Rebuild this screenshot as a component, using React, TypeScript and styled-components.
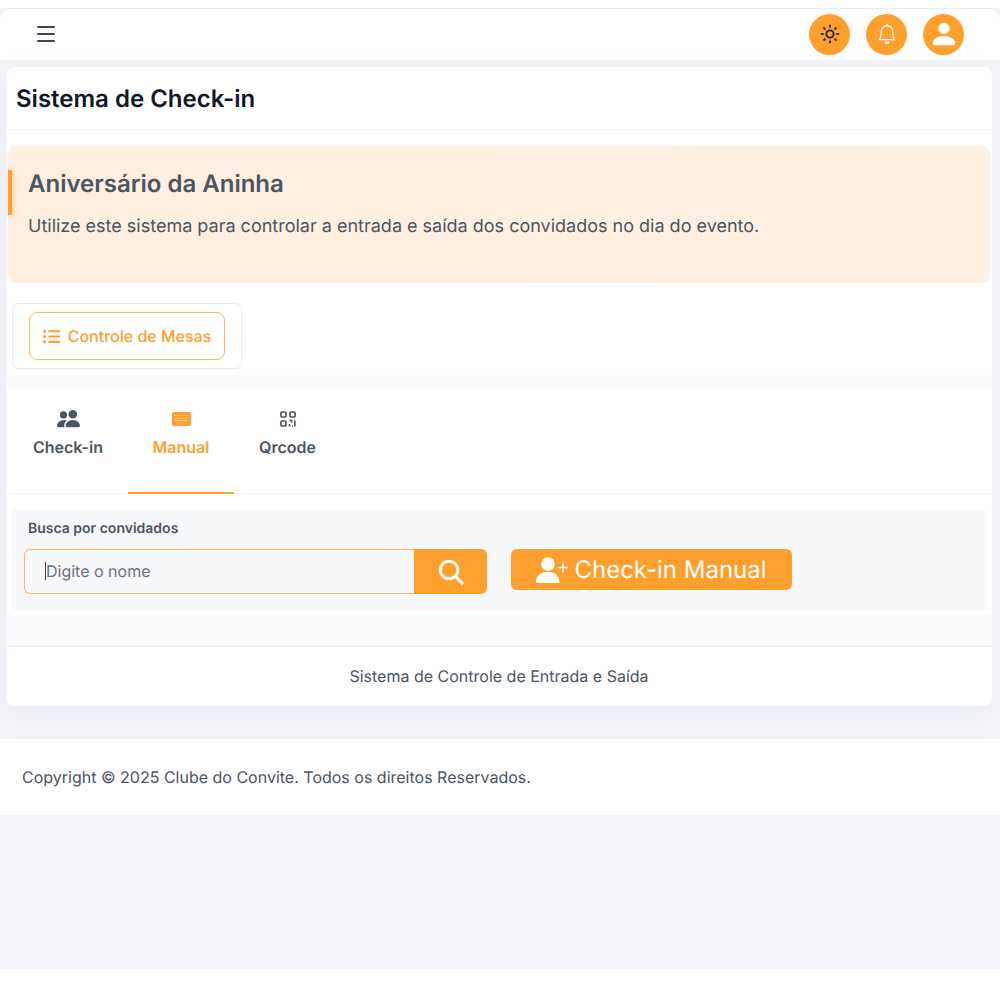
import React from "react";
import styled, { createGlobalStyle } from "styled-components";
import { Menu } from "lucide-react";
import { BsPeopleFill, BsBell, BsPersonFill } from "react-icons/bs";
import { BiSun } from "react-icons/bi";
import { FaListUl } from "react-icons/fa";

const orange = "#ff9f2d";
const ink = "#4b5563";

const Global = createGlobalStyle`
  html, body { margin: 0; background: #fff; }
  * { box-sizing: border-box; }
  body {
    font-family: Inter, "Liberation Sans", sans-serif;
    color: ${ink};
    text-rendering: geometricPrecision;
  }
`;
const Shell = styled.div`
  margin-top: 8px;
  height: 961px;
  background: #f4f5fa;
  display: flex;
  flex-direction: column;
`;
const TopBar = styled.header`
  height: 52px;
  flex: none;
  background: #fff;
  border-top: 1px solid #ececf0;
  border-radius: 10px 10px 0 0;
  display: flex;
  align-items: center;
  padding: 0 36px 0 34px;
  justify-content: space-between;
`;
const MenuButton = styled.span`
  display: flex;
  color: #3f4654;
  margin-top: -1px;
`;
const Actions = styled.div`
  display: flex;
  gap: 16px;
  margin-top: -1px;
`;
const RoundButton = styled.span<{ $dark?: boolean }>`
  width: 41px;
  height: 41px;
  border-radius: 50%;
  background: ${orange};
  color: ${(p) => (p.$dark ? "#2b2b2b" : "#fff")};
  display: flex;
  align-items: center;
  justify-content: center;
`;
const Main = styled.main`
  padding: 7px 8px 0 6px;
  flex: none;
`;
const Card = styled.section`
  height: 639px;
  background: #fff;
  border-radius: 8px;
  box-shadow: 0 10px 30px rgba(120, 125, 170, 0.08);
  display: flex;
  flex-direction: column;
  overflow: hidden;
`;
const CardHeader = styled.div`
  height: 63px;
  flex: none;
  border-bottom: 1px solid #f0f1f4;
  padding: 0 10px;
  display: flex;
  align-items: center;
`;
const Title = styled.h1`
  margin: 0;
  font-size: 24px;
  font-weight: 600;
  color: #111827;
`;
const Banner = styled.div`
  position: relative;
  margin: 16px 2px 0;
  height: 137px;
  flex: none;
  background: linear-gradient(90deg, #ffefe0, #fff1e4);
  border-radius: 8px;
  padding: 21px 20px 0;
  &::before {
    content: "";
    position: absolute;
    left: 0;
    top: 24px;
    width: 4px;
    height: 45px;
    background: ${orange};
    box-shadow: 1px 0 5px rgba(255, 159, 45, 0.5);
    border-radius: 0 2px 2px 0;
  }
`;
const BannerTitle = styled.h2`
  margin: 0;
  padding-top: 1px;
  font-size: 24px;
  line-height: 32px;
  font-weight: 600;
  color: ${ink};
`;
const BannerText = styled.p`
  margin: 13px 0 0;
  font-size: 18px;
  line-height: 28px;
  color: ${ink};
`;
const ControlBox = styled.div`
  margin: 20px 0 0 6px;
  width: 230px;
  height: 66px;
  flex: none;
  border: 1px solid #ebedf0;
  border-radius: 6px;
  padding: 8px 16px;
  background: #fff;
`;
const OutlineButton = styled.button`
  width: 196px;
  height: 48px;
  padding: 0;
  border: 1px solid #ffb868;
  border-radius: 8px;
  background: #fff;
  color: ${orange};
  display: flex;
  align-items: center;
  justify-content: center;
  gap: 8px;
  font: 500 16px Inter, sans-serif;
  text-rendering: geometricPrecision;
`;
const TabArea = styled.div`
  margin-top: 6px;
  padding-top: 15px;
  background: linear-gradient(#fcfcfd, #fbfbfd);
  flex: 1;
  display: flex;
  flex-direction: column;
`;
const TabPanel = styled.div`
  background: #fff;
  border-radius: 4px 4px 0 0;
  height: 224px;
  flex: none;
`;
const Tabs = styled.div`
  height: 104px;
  display: flex;
  border-bottom: 1px solid #f0f1f4;
  padding-left: 2px;
`;
const Tab = styled.div<{ $active?: boolean; $w: number }>`
  width: ${(p) => p.$w}px;
  height: 104px;
  display: flex;
  flex-direction: column;
  align-items: center;
  padding-top: 19px;
  gap: 9px;
  font-size: 16px;
  line-height: 20px;
  font-weight: 600;
  color: ${(p) => (p.$active ? orange : ink)};
  border-bottom: 2px solid ${(p) => (p.$active ? orange : "transparent")};
`;
const TabIcon = styled.span`
  height: 19px;
  display: flex;
  align-items: center;
`;
const SearchPanel = styled.div`
  margin: 16px 6px 0;
  height: 100px;
  background: #f7f8fa;
  padding: 9px 12px 0;
`;
const SearchLabel = styled.label`
  display: block;
  margin-left: 4px;
  font-size: 14px;
  line-height: 20px;
  font-weight: 600;
  color: ${ink};
`;
const SearchRow = styled.div`
  margin-top: 10px;
  display: flex;
  align-items: flex-start;
  gap: 24px;
`;
const InputGroup = styled.div`
  display: flex;
  width: 463px;
  height: 45px;
`;
const InputBox = styled.div`
  flex: 1;
  border: 1px solid #ffb868;
  border-right: 0;
  border-radius: 6px 0 0 6px;
  padding: 0 0 2px 20px;
  display: flex;
  align-items: center;
  font-size: 16px;
  color: #6b7280;
`;
const Caret = styled.span`
  width: 1px;
  height: 18px;
  background: #374151;
`;
const SearchButton = styled.button`
  width: 73px;
  border: 0;
  padding: 0;
  background: ${orange};
  color: #fff;
  border-radius: 0 6px 6px 0;
  display: flex;
  align-items: center;
  justify-content: center;
`;
const PrimaryButton = styled.button`
  width: 281px;
  height: 41px;
  border: 0;
  padding: 0;
  background: ${orange};
  color: #fff;
  border-radius: 6px;
  display: flex;
  align-items: center;
  justify-content: center;
  gap: 6px;
  font: 400 24px Inter, sans-serif;
  text-rendering: geometricPrecision;
`;
const CardFooter = styled.div`
  height: 60px;
  flex: none;
  margin-top: auto;
  background: #fff;
  border-top: 1px solid #eeeff2;
  display: flex;
  align-items: center;
  justify-content: center;
  padding-bottom: 2px;
  font-size: 16px;
`;
const PageFooter = styled.footer`
  margin-top: 33px;
  height: 76px;
  flex: none;
  background: #fff;
  padding-left: 22px;
  display: flex;
  align-items: center;
  font-size: 16px;
`;

const SearchIcon = () => (
  <svg width="26" height="26" viewBox="0 0 26 26" fill="none" stroke="currentColor" strokeLinecap="round">
    <circle cx="11" cy="11" r="8.8" strokeWidth="3" />
    <path d="M17.6 17.6 L24 24" strokeWidth="3.2" />
  </svg>
);
const UserPlusIcon = () => (
  <svg width="32" height="28" viewBox="0 0 32 28" fill="currentColor">
    <circle cx="12" cy="8" r="6.8" />
    <path d="M1 27c-.6 0-1-.4-1-1 0-5.8 4.5-10 10-10h4c5.500 0 9 4.200 9.500 10 0 .6-.4 1-1 1z" />
    <path d="M26.200 6.500h1.600v4.200H32v1.600h-4.200v4.200h-1.600v-4.200H22v-1.600h4.200z" />
  </svg>
);
const KeyboardIcon = () => (
  <svg width="19" height="14" viewBox="0 0 19 14">
    <rect width="19" height="14" rx="2" fill="currentColor" />
    <path
      d="M2.500 3.500h14M2.500 6h14M2.500 8.500h14M4.500 11h10"
      stroke="#ffe2bd"
      strokeWidth="1"
      strokeDasharray="1 1"
    />
  </svg>
);
const QrIcon = () => (
  <svg width="16" height="16" viewBox="0 0 16 16" fill="none" stroke="currentColor" strokeWidth="1.700">
    <rect x="1" y="1" width="5" height="5" rx="1" />
    <rect x="10" y="1" width="5" height="5" rx="1" />
    <rect x="1" y="10" width="5" height="5" rx="1" />
    <path d="M9.500 9.500h2v2M9.500 15.500v-2.500M12 15h1M14.800 9.500v6" />
  </svg>
);

export default function App() {
  return (
    <>
      <Global />
      <Shell>
        <TopBar>
          <MenuButton><Menu size={24} /></MenuButton>
          <Actions>
            <RoundButton $dark><BiSun size={22} /></RoundButton>
            <RoundButton><BsBell size={20} /></RoundButton>
            <RoundButton><BsPersonFill size={30} /></RoundButton>
          </Actions>
        </TopBar>
        <Main>
          <Card>
            <CardHeader><Title>Sistema de Check-in</Title></CardHeader>
            <Banner>
              <BannerTitle>Aniversário da Aninha</BannerTitle>
              <BannerText>Utilize este sistema para controlar a entrada e saída dos convidados no dia do evento.</BannerText>
            </Banner>
            <ControlBox>
              <OutlineButton><FaListUl size={17} />Controle de Mesas</OutlineButton>
            </ControlBox>
            <TabArea>
              <TabPanel>
                <Tabs>
                  <Tab $w={120}><TabIcon><BsPeopleFill size={23} /></TabIcon>Check-in</Tab>
                  <Tab $w={106} $active><TabIcon><KeyboardIcon /></TabIcon>Manual</Tab>
                  <Tab $w={107}><TabIcon><QrIcon /></TabIcon>Qrcode</Tab>
                </Tabs>
                <SearchPanel>
                  <SearchLabel>Busca por convidados</SearchLabel>
                  <SearchRow>
                    <InputGroup>
                      <InputBox><Caret />Digite o nome</InputBox>
                      <SearchButton><SearchIcon /></SearchButton>
                    </InputGroup>
                    <PrimaryButton><UserPlusIcon />Check-in Manual</PrimaryButton>
                  </SearchRow>
                </SearchPanel>
              </TabPanel>
              <CardFooter>Sistema de Controle de Entrada e Saída</CardFooter>
            </TabArea>
          </Card>
        </Main>
        <PageFooter>Copyright © 2025 Clube do Convite. Todos os direitos Reservados.</PageFooter>
      </Shell>
    </>
  );
}
